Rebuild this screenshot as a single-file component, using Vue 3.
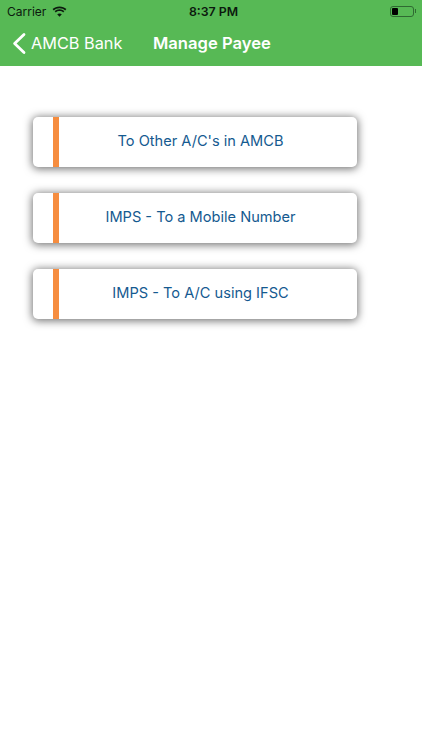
<script setup>
const items = ["To Other A/C's in AMCB", 'IMPS - To a Mobile Number', 'IMPS - To A/C using IFSC']
</script>

<template>
  <div class="page">
    <header class="header">
      <div class="status">
        <div class="status-left">
          <span class="carrier">Carrier</span>
          <svg class="wifi" width="15" height="11" viewBox="0 0 15 11">
            <path d="M7.5 2.2c2.2 0 4.2.8 5.7 2.2l1.2-1.3C12.6 1.4 10.2.4 7.5.4S2.4 1.4.6 3.1l1.2 1.3c1.5-1.4 3.5-2.2 5.7-2.2z" fill="#0c1a0e"/>
            <path d="M7.5 5c1.4 0 2.7.5 3.7 1.4l1.2-1.3C11.1 4 9.4 3.2 7.5 3.2S3.9 4 2.6 5.1l1.2 1.3C4.8 5.5 6.1 5 7.5 5z" fill="#0c1a0e"/>
            <path d="M7.5 7.4c-.9 0-1.7.3-2.3.9l2.3 2.4 2.3-2.4c-.6-.6-1.4-.9-2.3-.9z" fill="#0c1a0e"/>
          </svg>
        </div>
        <span class="time">8:37 PM</span>
        <div class="battery">
          <div class="battery-body"><div class="battery-level"></div></div>
          <div class="battery-tip"></div>
        </div>
      </div>
      <nav class="nav">
        <svg class="chevron" width="14" height="23" viewBox="0 0 14 23">
          <path d="M12 2.4 2.6 11.5 12 20.6" fill="none" stroke="#fff" stroke-width="2.8" stroke-linecap="round" stroke-linejoin="round"/>
        </svg>
        <span class="back">AMCB Bank</span>
        <span class="title">Manage Payee</span>
      </nav>
    </header>
    <main class="list">
      <div v-for="item in items" :key="item" class="card">
        <div class="accent"></div>
        <div class="label">{{ item }}</div>
      </div>
    </main>
  </div>
</template>

<style scoped>
.page {
  width: 422px;
  height: 750px;
  background: #fff;
  font-family: Inter, "Liberation Sans", sans-serif;
  overflow: hidden;
}
.header {
  height: 66px;
  background: #57b955;
  display: flex;
  flex-direction: column;
}
.status {
  height: 22px;
  padding: 0 6px 0 7px;
  display: flex;
  align-items: center;
  justify-content: space-between;
  color: #0c1a0e;
  position: relative;
}
.status-left {
  display: flex;
  align-items: center;
  gap: 6px;
}
.carrier {
  font-size: 12px;
}
.wifi {
  display: block;
}
.time {
  position: absolute;
  left: 5px;
  right: 0;
  text-align: center;
  font-size: 12.3px;
  font-weight: 600;
}
.battery {
  display: flex;
  align-items: center;
  gap: 1px;
}
.battery-body {
  width: 24px;
  height: 11px;
  box-sizing: border-box;
  border: 1px solid #2f6a32;
  border-radius: 3px;
  padding: 1px;
}
.battery-level {
  width: 6px;
  height: 100%;
  background: #000;
  border-radius: 1px;
}
.battery-tip {
  width: 1px;
  height: 4px;
  background: #2f6a32;
}
.nav {
  flex: 1;
  display: flex;
  align-items: center;
  padding: 0 0 2px 12px;
  color: #fff;
}
.chevron {
  display: block;
  margin-right: 5px;
}
.back {
  font-size: 16.3px;
  width: 122px;
}
.title {
  font-size: 16.6px;
  font-weight: 600;
}
.list {
  padding: 51px 0 0 33px;
  display: flex;
  flex-direction: column;
  gap: 26px;
}
.card {
  width: 324px;
  height: 50px;
  background: #fff;
  border-radius: 5px;
  box-shadow: 0 1px 8px 1px rgba(0, 0, 0, 0.55);
  display: flex;
  padding-left: 20px;
  box-sizing: border-box;
}
.accent {
  width: 6px;
  background: #f68d3f;
}
.label {
  flex: 1;
  display: flex;
  align-items: center;
  justify-content: center;
  padding: 0 15px 2px 0;
  color: #155a90;
  font-size: 14.6px;
}
</style>
